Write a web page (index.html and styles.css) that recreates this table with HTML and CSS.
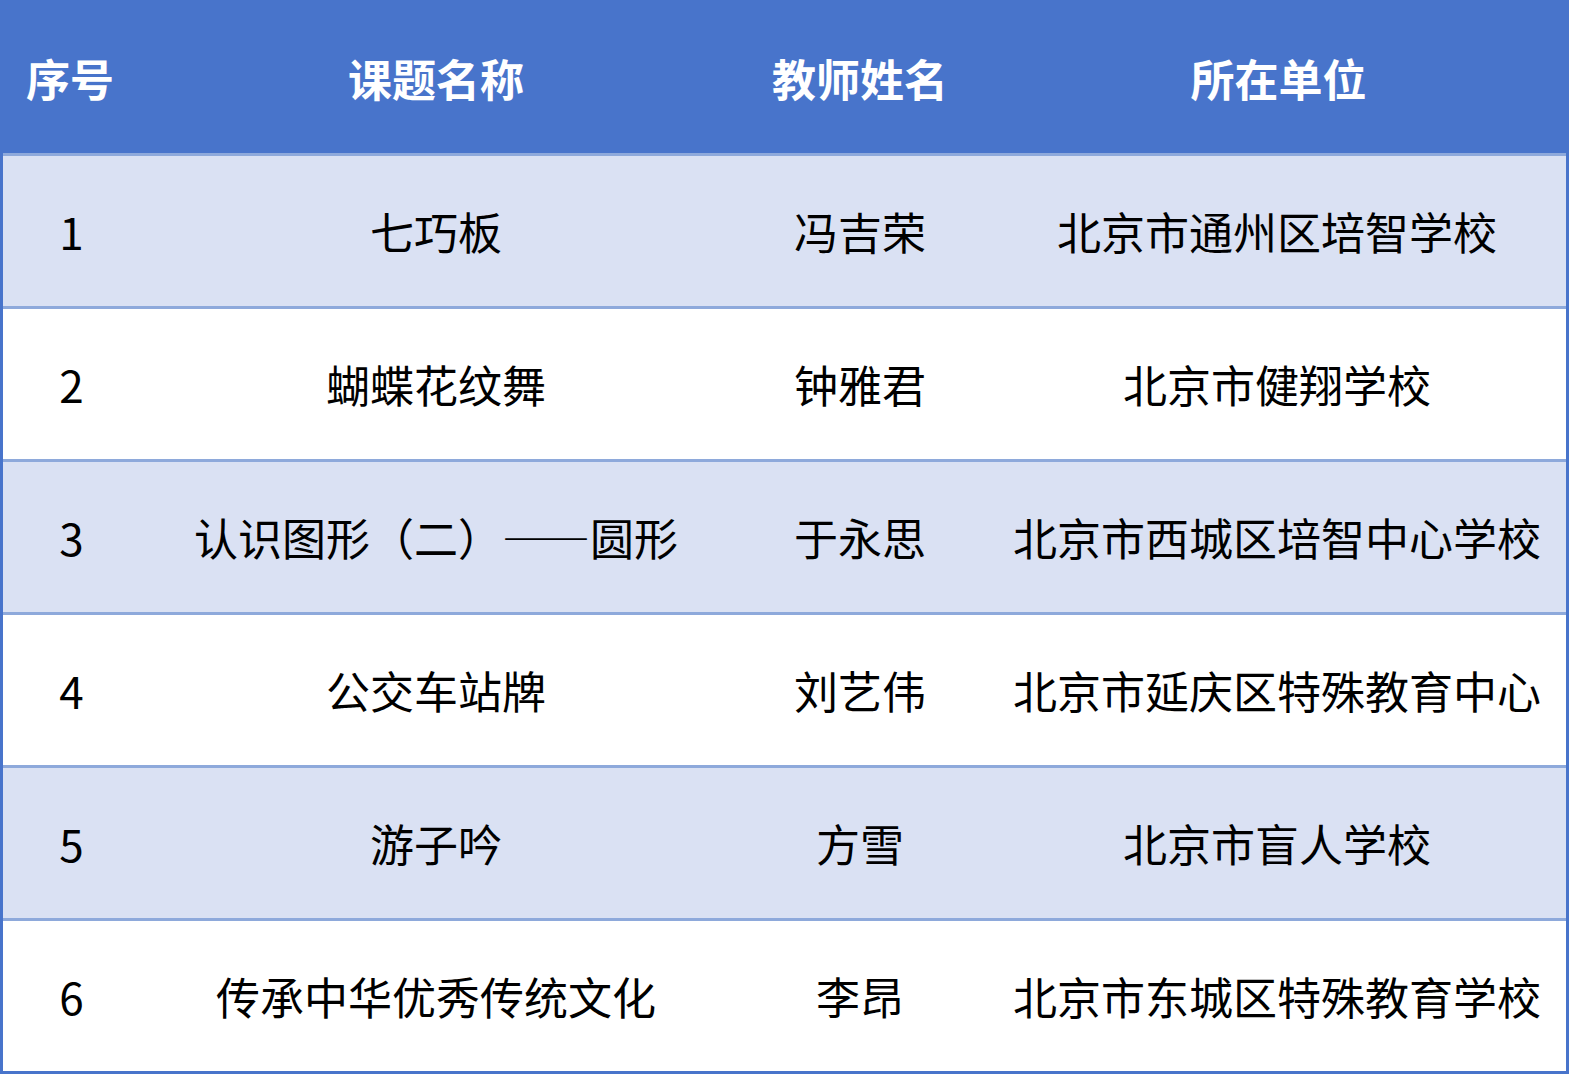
FILE: index.html
```html
<!DOCTYPE html>
<html lang="zh">
<head>
<meta charset="utf-8">
<link rel="stylesheet" href="styles.css">
</head>
<body>
<div class="table">
  <div class="row head">
    <div class="cell">序号</div>
    <div class="cell">课题名称</div>
    <div class="cell">教师姓名</div>
    <div class="cell">所在单位</div>
  </div>
  <div class="row odd">
    <div class="cell">1</div>
    <div class="cell">七巧板</div>
    <div class="cell">冯吉荣</div>
    <div class="cell">北京市通州区培智学校</div>
  </div>
  <div class="row even">
    <div class="cell">2</div>
    <div class="cell">蝴蝶花纹舞</div>
    <div class="cell">钟雅君</div>
    <div class="cell">北京市健翔学校</div>
  </div>
  <div class="row odd">
    <div class="cell">3</div>
    <div class="cell">认识图形（二）——圆形</div>
    <div class="cell">于永思</div>
    <div class="cell">北京市西城区培智中心学校</div>
  </div>
  <div class="row even">
    <div class="cell">4</div>
    <div class="cell">公交车站牌</div>
    <div class="cell">刘艺伟</div>
    <div class="cell">北京市延庆区特殊教育中心</div>
  </div>
  <div class="row odd">
    <div class="cell">5</div>
    <div class="cell">游子吟</div>
    <div class="cell">方雪</div>
    <div class="cell">北京市盲人学校</div>
  </div>
  <div class="row even">
    <div class="cell">6</div>
    <div class="cell">传承中华优秀传统文化</div>
    <div class="cell">李昂</div>
    <div class="cell">北京市东城区特殊教育学校</div>
  </div>
</div>
</body>
</html>
```
FILE: styles.css
```css
html, body {
  margin: 0;
  padding: 0;
  background: #ffffff;
}
body {
  font-family: "Microsoft YaHei", "Noto Sans CJK SC", "Noto Sans", sans-serif;
}
.table {
  width: 1569px;
  box-sizing: border-box;
  border-left: 3px solid #4874CB;
  border-right: 3px solid #4874CB;
  border-bottom: 3px solid #4874CB;
}
.row {
  display: grid;
  grid-template-columns: 137px 592px 256px 1fr;
  height: 150px;
  border-top: 3px solid #8EA9DB;
  color: #000000;
  font-size: 44px;
}
.row.head {
  height: 153px;
  border-top: none;
  background: #4874CB;
  color: #ffffff;
  font-weight: 700;
  margin-left: -3px;
  margin-right: -3px;
  grid-template-columns: 140px 592px 256px 1fr;
}
.row.odd { background: #DAE1F3; }
.row.even { background: #ffffff; }
.cell {
  display: flex;
  align-items: center;
  justify-content: center;
  white-space: nowrap;
  line-height: 1;
}
.row .cell { padding-top: 0; }
.row.head .cell { padding-top: 3px; }
```
